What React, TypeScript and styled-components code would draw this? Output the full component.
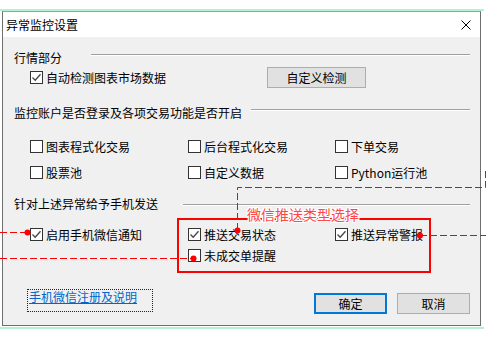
import React from "react";
import styled, { createGlobalStyle } from "styled-components";

const Global = createGlobalStyle`
  html, body { margin: 0; padding: 0; background: #fff; }
  body {
    font-family: "Noto Sans CJK SC", "Noto Sans", sans-serif;
    font-size: 12px;
    color: #000;
  }
`;

const Screen = styled.div`
  position: relative;
  width: 486px;
  height: 338px;
  overflow: hidden;
  background: #fff;
  padding-top: 9px;
  box-sizing: border-box;
`;

const Frame = styled.div`
  width: 484px;
  border-top: 2px solid #b2f2d4;
  border-bottom: 2px solid #b2f2d4;
  padding-left: 2px;
  box-sizing: border-box;
`;

const Dialog = styled.div`
  width: 479px;
  height: 315px;
  box-sizing: border-box;
  border: 1px solid #6e6e6e;
  border-top-color: #a0a0a0;
  display: flex;
  flex-direction: column;
  margin-bottom: 1px;
`;

const TitleBar = styled.div`
  height: 25px;
  flex: none;
  background: #fff;
  display: flex;
  align-items: center;
  justify-content: space-between;
  padding: 0 9px 0 3px;
  font-size: 12px;
  line-height: 25px;
`;

const Body = styled.div`
  flex: 1;
  background: #f0f0f0;
  padding: 13px 10px 0 11px;
  display: flex;
  flex-direction: column;
`;

const Header = styled.div<{ $mt: number }>`
  height: 16px;
  margin-top: ${(p) => p.$mt}px;
  display: flex;
  align-items: flex-start;
  line-height: 16px;
  white-space: nowrap;
`;

const HeaderLine = styled.div<{ $ml: number; $top: number }>`
  flex: 1;
  margin-left: ${(p) => p.$ml}px;
  margin-top: ${(p) => p.$top}px;
  border-top: 1px solid #a0a0a0;
  border-bottom: 1px solid #ffffff;
`;

const Grid = styled.div<{ $mt: number; $cols: string; $gap: number }>`
  margin-top: ${(p) => p.$mt}px;
  padding-left: 16px;
  display: grid;
  grid-template-columns: ${(p) => p.$cols};
  row-gap: ${(p) => p.$gap}px;
  align-items: center;
`;

const Check = styled.label<{ $col?: number }>`
  display: flex;
  align-items: center;
  gap: 3px;
  height: 13px;
  line-height: 13px;
  white-space: nowrap;
  grid-column: ${(p) => p.$col ?? "auto"};
`;

const Box = styled.span`
  width: 13px;
  height: 13px;
  box-sizing: border-box;
  border: 1px solid #333;
  background: #fff;
  display: flex;
  align-items: center;
  justify-content: center;
  flex: none;
`;

const Button = styled.div<{ $w: number; $primary?: boolean }>`
  width: ${(p) => p.$w}px;
  height: 21px;
  box-sizing: border-box;
  border: ${(p) => (p.$primary ? "2px solid #0078d7" : "1px solid #adadad")};
  background: #e1e1e1;
  display: flex;
  align-items: center;
  justify-content: center;
  line-height: 16px;
`;

const Footer = styled.div`
  margin-top: 27px;
  display: flex;
  align-items: flex-start;
`;

const LinkBox = styled.div`
  margin-left: 13px;
  width: 126px;
  height: 23px;
  box-sizing: border-box;
  border: 1px dotted #222;
  padding-left: 1px;
  line-height: 14px;
  color: #0066cc;
  text-decoration: underline;
  white-space: nowrap;
`;

const ButtonGroup = styled.div`
  margin-left: auto;
  margin-top: 4px;
  display: flex;
  gap: 10px;
`;

const Overlay = styled.svg`
  position: absolute;
  left: 0;
  top: 0;
  pointer-events: none;
`;

const Annotation = styled.span`
  position: absolute;
  left: 247px;
  top: 206px;
  font-size: 14px;
  line-height: 17px;
  color: #ff4747;
  white-space: nowrap;
  text-shadow: 1px 0 #fff, -1px 0 #fff, 0 1px #fff, 0 -1px #fff,
    1px 1px #fff, -1px -1px #fff, 1px -1px #fff, -1px 1px #fff;
`;

const CheckMark = () => (
  <svg width="11" height="11" viewBox="0 0 11 11">
    <path d="M1.5 5.5 L4.2 8.2 L9.5 2.2" fill="none" stroke="#444" strokeWidth="1.3" />
  </svg>
);

const CheckBox: React.FC<{ checked?: boolean; col?: number; children: React.ReactNode }> = ({
  checked,
  col,
  children,
}) => (
  <Check $col={col}>
    <Box>{checked && <CheckMark />}</Box>
    <span>{children}</span>
  </Check>
);

const dash = "7 3";

export default function App() {
  return (
    <>
      <Global />
      <Screen>
        <Frame>
          <Dialog>
            <TitleBar>
              <span>异常监控设置</span>
              <svg width="10" height="10" viewBox="0 0 10 10">
                <path d="M0.5 0.5 L9.5 9.5 M9.5 0.5 L0.5 9.5" stroke="#000" strokeWidth="1" />
              </svg>
            </TitleBar>
            <Body>
              <Header $mt={0}>
                <span>行情部分</span>
                <HeaderLine $ml={29} $top={4} />
              </Header>
              <Grid $mt={1} $cols="237px 99px" $gap={0}>
                <CheckBox checked>自动检测图表市场数据</CheckBox>
                <Button $w={99}>自定义检测</Button>
              </Grid>

              <Header $mt={17}>
                <span>监控账户是否登录及各项交易功能是否开启</span>
                <HeaderLine $ml={9} $top={4} />
              </Header>
              <Grid $mt={19} $cols="158px 147px auto" $gap={13}>
                <CheckBox>图表程式化交易</CheckBox>
                <CheckBox>后台程式化交易</CheckBox>
                <CheckBox>下单交易</CheckBox>
                <CheckBox>股票池</CheckBox>
                <CheckBox>自定义数据</CheckBox>
                <CheckBox>Python运行池</CheckBox>
              </Grid>

              <Header $mt={17}>
                <span>针对上述异常给予手机发送</span>
                <HeaderLine $ml={25} $top={8} />
              </Header>
              <Grid $mt={16} $cols="158px 147px auto" $gap={8}>
                <CheckBox checked>启用手机微信通知</CheckBox>
                <CheckBox checked>推送交易状态</CheckBox>
                <CheckBox checked>推送异常警报</CheckBox>
                <CheckBox col={2}>未成交单提醒</CheckBox>
              </Grid>

              <Footer>
                <LinkBox>手机微信注册及说明</LinkBox>
                <ButtonGroup>
                  <Button $w={73} $primary>
                    确定
                  </Button>
                  <Button $w={73}>取消</Button>
                </ButtonGroup>
              </Footer>
            </Body>
          </Dialog>
        </Frame>

        <Overlay width="486" height="338" viewBox="0 0 486 338">
          <rect x="178" y="219" width="252" height="53" fill="none" stroke="#ff0000" strokeWidth="2" />
          <g stroke="#ff0000" strokeWidth="1" strokeDasharray={dash} fill="none">
            <path d="M0 232.5 H27" />
            <path d="M0 258.5 H193" />
            <path d="M237.5 230 V187.5 H485.5 V170" />
            <path d="M420 235.5 H486" />
          </g>
          <g fill="#ff0000">
            <circle cx="27.5" cy="232.5" r="3" />
            <circle cx="193.5" cy="258.5" r="3" />
            <circle cx="237.5" cy="230.5" r="3" />
            <circle cx="420" cy="235.5" r="3" />
          </g>
        </Overlay>
        <Annotation>微信推送类型选择</Annotation>
      </Screen>
    </>
  );
}
